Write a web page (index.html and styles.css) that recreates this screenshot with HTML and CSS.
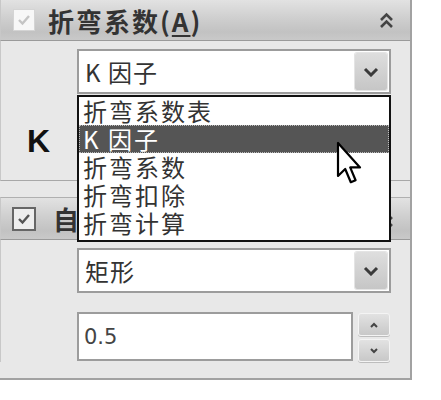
FILE: index.html
```html
<!DOCTYPE html>
<html lang="zh">
<head>
    <meta charset="UTF-8">
    <title>折弯系数</title>
    <link rel="stylesheet" href="styles.css">
</head>
<body>
<div class="panel">

    <!-- Group 1: bend allowance -->
    <div class="group">
        <div class="group-head">
            <span class="check disabled">
                <svg width="14" height="12" viewBox="0 0 14 12"><path d="M2 6 L5.5 9.5 L12 2" fill="none" stroke="#c4c4c4" stroke-width="2.4"/></svg>
            </span>
            <span class="group-title">折弯系数(<u>A</u>)</span>
            <svg class="collapse" width="15" height="18" viewBox="0 0 15 18">
                <path d="M2 9 L7.5 3.5 L13 9 M2 16 L7.5 10.5 L13 16" fill="none" stroke="#444" stroke-width="2.6"/>
            </svg>
        </div>
        <div class="group-body first">
            <div class="field-row">
                <div class="select">
                    <span class="select-text">K 因子</span>
                    <span class="select-btn">
                        <svg width="16" height="10" viewBox="0 0 16 10"><path d="M2 2 L8 8 L14 2" fill="none" stroke="#3a3a3a" stroke-width="3"/></svg>
                    </span>
                </div>
            </div>
            <div class="label-row">
                <span class="k-label">K</span>
            </div>
        </div>
    </div>

    <!-- Group 2: mostly hidden behind the open list -->
    <div class="group second">
        <div class="group-head">
            <span class="check">
                <svg width="14" height="12" viewBox="0 0 14 12"><path d="M2 6 L5.5 9.5 L12 2" fill="none" stroke="#555" stroke-width="2.4"/></svg>
            </span>
            <span class="group-title">自</span>
            <svg class="collapse" width="15" height="18" viewBox="0 0 15 18">
                <path d="M2 9 L7.5 3.5 L13 9 M2 16 L7.5 10.5 L13 16" fill="none" stroke="#444" stroke-width="2.6"/>
            </svg>
        </div>
        <div class="group-body">
            <div class="field-row">
                <div class="select">
                    <span class="select-text">矩形</span>
                    <span class="select-btn">
                        <svg width="16" height="10" viewBox="0 0 16 10"><path d="M2 2 L8 8 L14 2" fill="none" stroke="#3a3a3a" stroke-width="3"/></svg>
                    </span>
                </div>
            </div>
            <div class="field-row spin-row">
                <div class="spin-input">0.5</div>
                <div class="spin-btns">
                    <span class="spin-btn">
                        <svg width="10" height="6" viewBox="0 0 10 6"><path d="M2 5 L5 2 L8 5" fill="none" stroke="#444" stroke-width="2"/></svg>
                    </span>
                    <span class="spin-btn">
                        <svg width="10" height="6" viewBox="0 0 10 6"><path d="M2 1 L5 4 L8 1" fill="none" stroke="#444" stroke-width="2"/></svg>
                    </span>
                </div>
            </div>
        </div>
    </div>

    <!-- Open dropdown list -->
    <ul class="drop-list">
        <li>折弯系数表</li>
        <li class="active">K 因子</li>
        <li>折弯系数</li>
        <li>折弯扣除</li>
        <li>折弯计算</li>
    </ul>

    <!-- Mouse pointer -->
    <svg class="pointer" width="28" height="46" viewBox="0 0 14 23">
        <path d="M1 1 V17.5 L4.6 14 L7.4 20.6 L9.8 19.6 L7.1 13.2 H12 Z" fill="#fff" stroke="#000" stroke-width="1.1" stroke-linejoin="round"/>
    </svg>
</div>
</body>
</html>
```

FILE: styles.css
```css
body {
    margin: 0;
    background: #fff;
    font-family: "Noto Sans CJK SC", "DejaVu Sans", sans-serif;
}

/* Outer property panel */
.panel {
    position: relative;
    width: 410px;
    height: 378px;
    background: #e8e8e8;
    border-right: 2px solid #a2a2a2;
    border-bottom: 2px solid #a2a2a2;
    display: flex;
    flex-direction: column;
}

.group {
    display: flex;
    flex-direction: column;
}

.group.second {
    margin-top: 16px;
    flex: 1;
}

/* Group header bar */
.group-head {
    height: 40px;
    display: flex;
    align-items: center;
    padding: 0 0 0 12px;
    background: linear-gradient(#e2e2e2, #cfcfcf 45%, #c2c2c2 80%, #c9c9c9);
    border-bottom: 1px solid #9a9a9a;
    border-left: 1px solid #c8c8c8;
}

.group.second .group-head {
    height: 41px;
    padding-left: 11px;
    border-top: 1px solid #b0b0b0;
}

.check {
    width: 22px;
    height: 22px;
    box-sizing: border-box;
    border: 2px solid #666;
    background: #eeeeee;
    display: flex;
    align-items: center;
    justify-content: center;
}

.group.second .check {
    width: 24px;
    height: 24px;
}

.check.disabled {
    border: 1px solid #d4d4d4;
    background: #f7f7f7;
}

.group-title {
    margin-left: 13px;
    font-size: 26px;
    font-weight: bold;
    color: #333;
    letter-spacing: 2px;
}

.group.second .group-title {
    margin-left: 17px;
}

.group-title u {
    text-decoration-thickness: 2px;
    text-underline-offset: 3px;
}

.collapse {
    margin-left: auto;
    margin-right: 16px;
}

/* Group body */
.group-body {
    display: flex;
    flex-direction: column;
    padding: 8px 0 0 76px;
    border-left: 1px solid #c8c8c8;
}

.group-body.first {
    height: 131px;
    border-bottom: 1px solid #a8a8a8;
}

.field-row {
    display: flex;
}

.label-row {
    margin-left: -76px;
    padding: 31px 0 0 26px;
}

.k-label {
    font-family: "Liberation Sans", Arial, sans-serif;
    font-size: 32px;
    font-weight: bold;
    color: #111;
    line-height: 1;
}

/* Combo box */
.select {
    width: 314px;
    height: 45px;
    box-sizing: border-box;
    border: 2px solid #9c9c9c;
    background: #fff;
    display: flex;
    align-items: center;
    padding: 0 2px 0 6px;
}

.select-text {
    font-size: 24px;
    color: #333;
    letter-spacing: 1px;
}

.select-btn {
    margin-left: auto;
    width: 32px;
    height: 37px;
    border-radius: 2px;
    background: linear-gradient(#dedede, #c6c6c6);
    box-shadow: 0 0 0 1px #e4e4e4;
    display: flex;
    align-items: center;
    justify-content: center;
}

/* Spinner */
.spin-row {
    margin-top: 19px;
}

.spin-input {
    width: 276px;
    height: 49px;
    box-sizing: border-box;
    border: 2px solid #9c9c9c;
    background: #fff;
    padding: 0 5px;
    display: flex;
    align-items: center;
    font-family: "DejaVu Sans", sans-serif;
    font-size: 21px;
    color: #444;
}

.spin-btns {
    margin-left: 5px;
    display: flex;
    flex-direction: column;
    gap: 3px;
    padding-top: 1px;
}

.spin-btn {
    width: 30px;
    height: 21px;
    border-radius: 3px;
    background: linear-gradient(#e2e2e2, #c8c8c8);
    border: 1px solid #f4f4f4;
    box-shadow: 0 1px 0 #bdbdbd;
    display: flex;
    align-items: center;
    justify-content: center;
}

/* Open dropdown list over the panel */
.drop-list {
    position: absolute;
    left: 77px;
    top: 95px;
    width: 314px;
    box-sizing: border-box;
    margin: 0;
    padding: 0 0 3px;
    list-style: none;
    background: #fff;
    border: 2px solid #111;
}

.drop-list li {
    height: 28px;
    line-height: 28px;
    padding-left: 4px;
    font-size: 24px;
    color: #333;
    letter-spacing: 2px;
    box-sizing: border-box;
}

.drop-list li.active {
    background: #555;
    color: #fff;
    border: 1px dotted #bbb;
    padding-left: 3px;
    line-height: 26px;
}

.pointer {
    position: absolute;
    left: 336px;
    top: 141px;
}
```
